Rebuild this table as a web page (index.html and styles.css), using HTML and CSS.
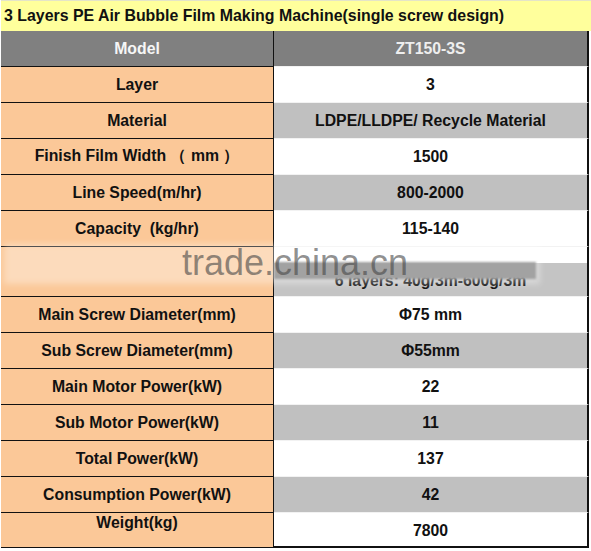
FILE: index.html
```html
<!DOCTYPE html>
<html lang="en">
<head>
  <meta charset="UTF-8" />
  <title>ZT150-3S</title>
  <link rel="stylesheet" href="styles.css">
</head>
<body>

<div class="sheet">
  <div class="title">3 Layers PE Air Bubble Film Making Machine(single screw design)</div>

  <div class="row head">
    <div class="key">Model</div>
    <div class="val">ZT150-3S</div>
  </div>
  <div class="row">
    <div class="key">Layer</div>
    <div class="val">3</div>
  </div>
  <div class="row grey">
    <div class="key">Material</div>
    <div class="val">LDPE/LLDPE/ Recycle Material</div>
  </div>
  <div class="row">
    <div class="key">Finish Film Width （ mm ）</div>
    <div class="val">1500</div>
  </div>
  <div class="row grey">
    <div class="key">Line Speed(m/hr)</div>
    <div class="val">800-2000</div>
  </div>
  <div class="row">
    <div class="key">Capacity&nbsp; (kg/hr)</div>
    <div class="val">115-140</div>
  </div>
  <div class="row tall">
    <div class="key"></div>
    <div class="val split">6 layers: 40g/3m-600g/3m</div>
  </div>
  <div class="row">
    <div class="key">Main Screw Diameter(mm)</div>
    <div class="val">Φ75 mm</div>
  </div>
  <div class="row grey">
    <div class="key">Sub Screw Diameter(mm)</div>
    <div class="val">Φ55mm</div>
  </div>
  <div class="row">
    <div class="key">Main Motor Power(kW)</div>
    <div class="val">22</div>
  </div>
  <div class="row grey">
    <div class="key">Sub Motor Power(kW)</div>
    <div class="val">11</div>
  </div>
  <div class="row">
    <div class="key">Total Power(kW)</div>
    <div class="val">137</div>
  </div>
  <div class="row grey">
    <div class="key">Consumption Power(kW)</div>
    <div class="val">42</div>
  </div>
  <div class="row last">
    <div class="key">Weight(kg)</div>
    <div class="val">7800</div>
  </div>

  <!-- watermark laid over the table -->
  <div class="wm-band"></div>
  <div class="wm-shade"></div>
  <div class="wm-text">trade.china.cn</div>
</div>

</body>
</html>
```

FILE: styles.css
```css
* {
  margin: 0;
  padding: 0;
  box-sizing: border-box;
}

body {
  font-family: 'Liberation Sans', Arial, sans-serif;
  font-weight: bold;
  font-size: 15.8px;
  color: #111;
  background: #fff;
}

.sheet {
  position: relative;
  width: 591px;
  height: 551px;
  overflow: hidden;
}

.title {
  height: 31px;
  margin-left: 1px;
  padding: 6px 0 0 3px;
  background: #ffff9c;
  border-top: 1px solid #e4e4c8;
  font-size: 15.9px;
}

.row {
  display: grid;
  grid-template-columns: 274px 315px;
  height: 36px;
}

.key {
  display: flex;
  align-items: center;
  justify-content: center;
  margin-left: 1px;
  background: #fbc898;
  border-right: 1px solid #111;
  border-bottom: 1px solid #111;
}

.val {
  display: flex;
  align-items: center;
  justify-content: center;
  background: #fff;
  border-right: 2px solid #111;
  border-bottom: 1px solid #f2f2f2;
}

.grey .val {
  background: #c0c0c0;
}

.head .key {
  background: #808080;
  color: #f6f6f6;
}

.head .val {
  background: #7f7f7f;
  color: #eeeeee;
}

.tall {
  height: 50px;
}

.val.split {
  align-items: flex-end;
  padding-bottom: 6px;
  background: linear-gradient(#fff 0, #fff 16px, #c4c4c4 16px);
}

.last {
  height: 35px;
}

.last .key {
  align-items: flex-start;
  padding-top: 1px;
}

.last .val {
  align-items: flex-start;
  padding-top: 9px;
  border-bottom: 2px solid #111;
}

.wm-band {
  position: absolute;
  left: 4px;
  top: 244px;
  width: 536px;
  height: 40px;
  background: rgba(255, 255, 255, 0.35);
  filter: blur(3px);
}

.wm-shade {
  position: absolute;
  left: 274px;
  top: 262px;
  width: 262px;
  height: 17px;
  background: #a2a2a2;
  filter: blur(1px);
}

.wm-text {
  position: absolute;
  left: 182px;
  top: 242px;
  font-weight: normal;
  font-size: 36px;
  color: rgba(70, 70, 70, 0.6);
}
```
